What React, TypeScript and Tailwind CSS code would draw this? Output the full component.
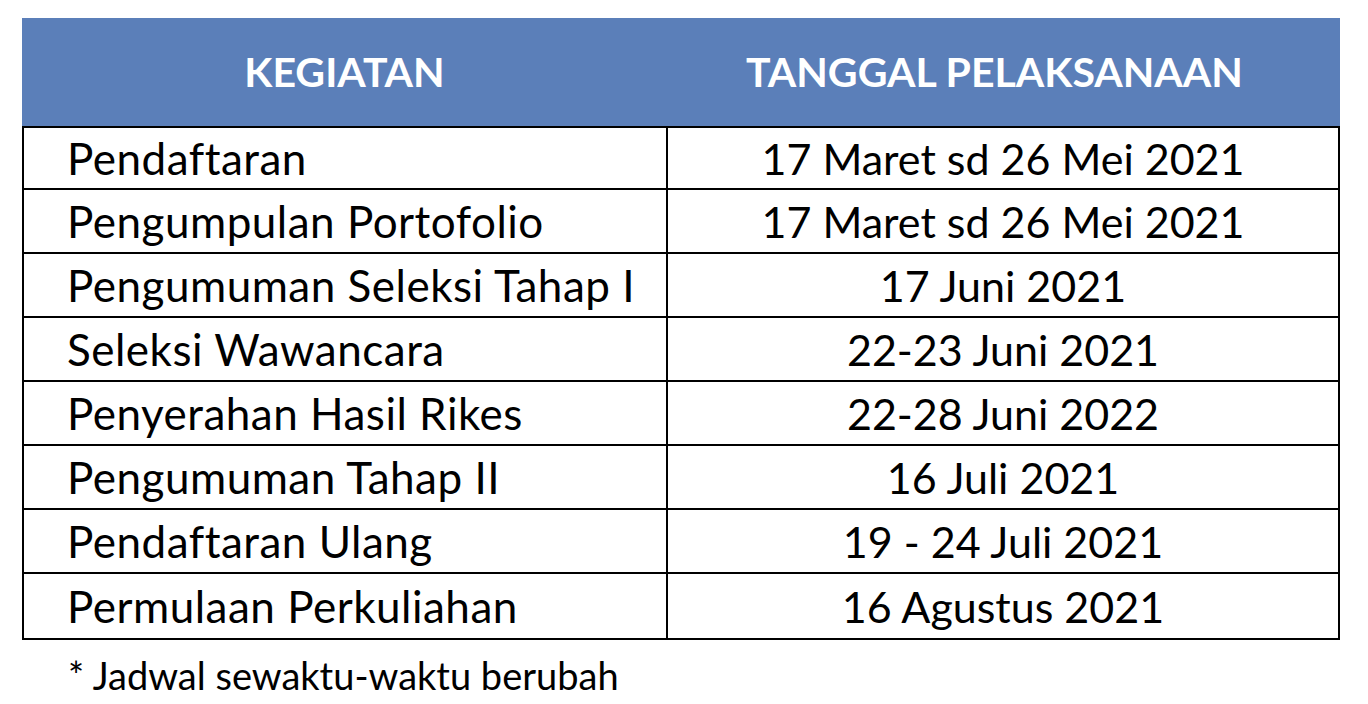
const ROWS: [string, string][] = [
  ["Pendaftaran", "17 Maret sd 26 Mei 2021"],
  ["Pengumpulan Portofolio", "17 Maret sd 26 Mei 2021"],
  ["Pengumuman Seleksi Tahap I", "17 Juni 2021"],
  ["Seleksi Wawancara", "22-23 Juni 2021"],
  ["Penyerahan Hasil Rikes", "22-28 Juni 2022"],
  ["Pengumuman Tahap II", "16 Juli 2021"],
  ["Pendaftaran Ulang", "19 - 24 Juli 2021"],
  ["Permulaan Perkuliahan", "16 Agustus 2021"],
];

export default function App() {
  return (
    <div className="min-h-screen bg-white pt-[18px] pl-[22px] font-['Lato','Open_Sans',sans-serif] text-black">
      <div className="w-[1318px]">
        <div className="grid h-[108px] grid-cols-[645px_1fr] items-center bg-[#5b7fb9] text-[41px] font-bold text-white">
          <div className="text-center">KEGIATAN</div>
          <div className="pr-[18px] text-center">TANGGAL PELAKSANAAN</div>
        </div>
        <div className="divide-y-2 divide-black border-2 border-black">
          {ROWS.map(([kegiatan, tanggal]) => (
            <div key={kegiatan} className="flex h-[64px] items-center leading-none first:h-[62px]">
              <div className="flex h-full w-[644px] items-center border-r-2 border-black pl-[43px] text-[44px] tracking-[0.5px]">
                {kegiatan}
              </div>
              <div className="flex-1 text-center text-[43px]">{tanggal}</div>
            </div>
          ))}
        </div>
      </div>
      <p className="mt-[16px] pl-[46px] text-[38px] leading-none">* Jadwal sewaktu-waktu berubah</p>
    </div>
  );
}
